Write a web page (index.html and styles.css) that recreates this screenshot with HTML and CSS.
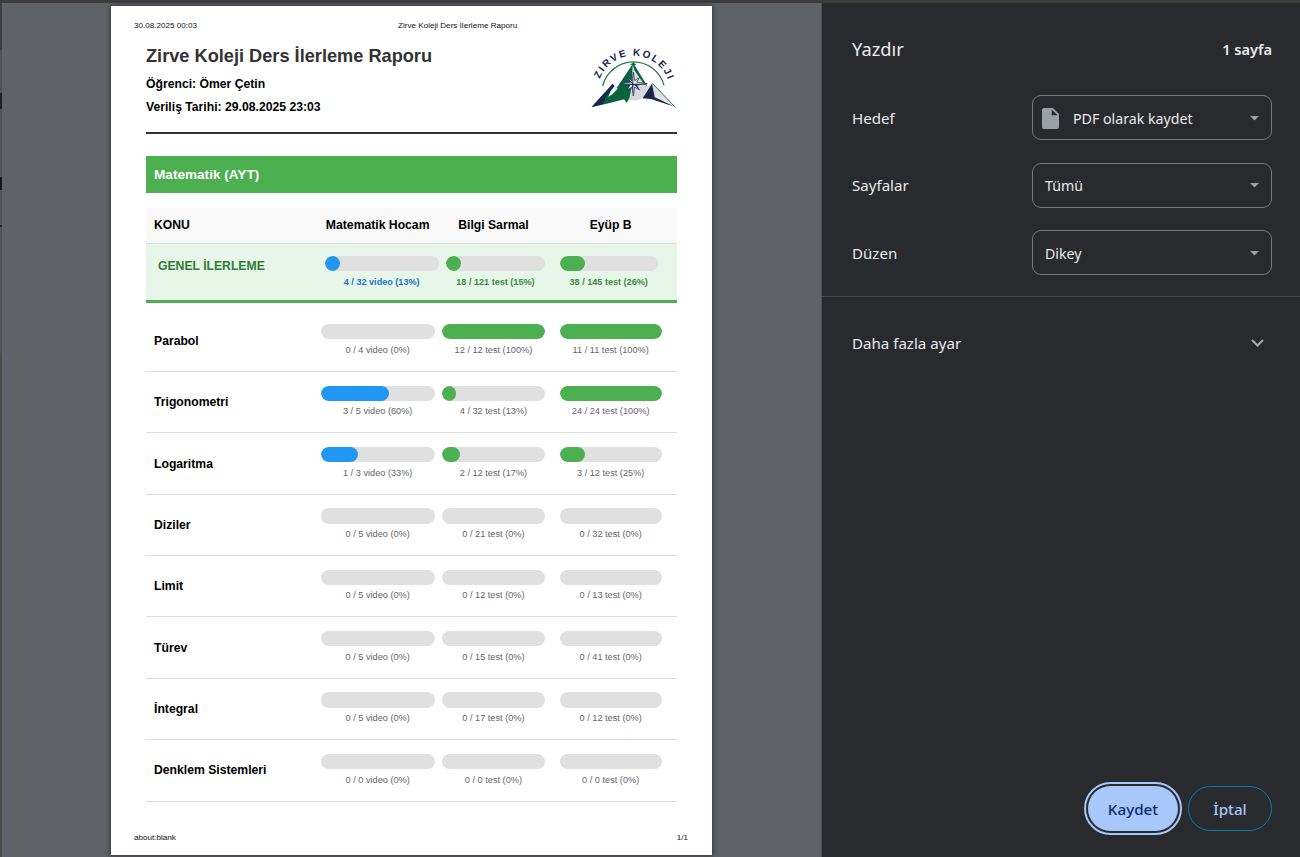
FILE: index.html
```html
<!DOCTYPE html>
<html lang="tr">
<head>
<meta charset="utf-8">
<title>Yazdır</title>
<link rel="stylesheet" href="styles.css">
</head>
<body>
<div class="dialog">
  <div class="edge"></div>
  <main class="preview">
    <article class="sheet">
      <header class="print-head"><span class="stamp">30.08.2025 00:03</span><span class="doc-name">Zirve Koleji Ders İlerleme Raporu</span></header>
      <section class="report-head">
        <div>
          <h1><span>Zirve Koleji Ders İlerleme Raporu</span></h1>
          <p>Öğrenci: Ömer Çetin</p>
          <p>Veriliş Tarihi: 29.08.2025 23:03</p>
        </div>
        <svg class="logo" viewBox="30 30 258 190">
          <path id="ring" d="M52 168A109 109 0 0 1 270 168" fill="none"/>
          <path d="M68 150A95 95 0 0 1 252 148" fill="none" stroke="#2b7d50" stroke-width="4"/>
          <text class="logo-text"><textPath href="#ring" startOffset="51%" text-anchor="middle">ZIRVE KOLEJI</textPath></text>
          <path d="M35 213L100 142L116 160L160 82L204 152L216 141L284 212L218 188L188 187L168 194L140 190Z" fill="#d5d8dc"/>
          <path d="M35 213L98 144L86 181L112 153L158 84L154 158L148 187L140 200L132 190L76 204Z" fill="#08633d"/>
          <path d="M35 213L98 143L103 151L78 181L70 204Z" fill="#16264d"/>
          <path d="M84 184L105 149L113 158L98 174Z" fill="#e9ecef"/>
          <path d="M160 82L202 151L192 145L163 102Z" fill="#08633d"/>
          <path d="M188 187L216 143L224 184L284 212L213 189Z" fill="#16264d"/>
          <path d="M220 144L284 212L228 183Z" fill="#dfe2e5"/>
          <path d="M217 142L284 212" stroke="#2b7d50" stroke-width="3"/>
          <path d="M160 75L162 82L170 85L162 88L160 97L158 88L150 85L158 82Z" fill="#08633d"/>
          <path d="M160 108L164 134L178 125L170 139L202 143L170 147L178 162L164 153L160 180L156 153L142 162L150 147L119 143L150 139L142 125L156 134Z" fill="#eef0f3" stroke="#16264d" stroke-width="2"/>
          <path d="M160 108V180L156 150ZM119 143H202L160 148ZM142 125L160 143L150 139ZM178 162L160 143L170 147Z" fill="#16264d"/>
        </svg>
      </section>
      <h2>Matematik (AYT)</h2>
      <section class="table">
        <div class="row columns"><b>KONU</b><b>Matematik Hocam</b><b>Bilgi Sarmal</b><b>Eyüp B</b></div>
        <div class="row overall">
          <b>GENEL İLERLEME</b>
          <div class="cell video"><div class="bar"><i style="width:13%"></i></div><small>4 / 32 video (13%)</small></div>
          <div class="cell"><div class="bar"><i style="width:15%"></i></div><small>18 / 121 test (15%)</small></div>
          <div class="cell"><div class="bar"><i style="width:26%"></i></div><small>38 / 145 test (26%)</small></div>
        </div>
        <div class="topics" id="topics"></div>
      </section>
      <footer class="print-foot"><span>about:blank</span><span>1/1</span></footer>
    </article>
  </main>
  <aside class="settings">
    <div class="title"><h3>Yazdır</h3><strong>1 sayfa</strong></div>
    <div class="setting"><label>Hedef</label><div class="select target">
      <svg class="file" viewBox="0 0 17 21"><path d="M2 0H11L17 6V19Q17 21 15 21H2Q0 21 0 19V2Q0 0 2 0Z" fill="#9aa0a6"/><path d="M9.7 1.5V7.3H15.5Z" fill="#292a2d"/></svg>
      <span>PDF olarak kaydet</span><svg class="arrow" viewBox="0 0 9 5"><path d="M0 0H9L4.5 4.5Z"/></svg></div></div>
    <div class="setting"><label>Sayfalar</label><div class="select"><span>Tümü</span><svg class="arrow" viewBox="0 0 9 5"><path d="M0 0H9L4.5 4.5Z"/></svg></div></div>
    <div class="setting"><label>Düzen</label><div class="select"><span>Dikey</span><svg class="arrow" viewBox="0 0 9 5"><path d="M0 0H9L4.5 4.5Z"/></svg></div></div>
    <div class="more"><span>Daha fazla ayar</span><svg viewBox="0 0 13 8"><path d="M1 1L6.5 6.5L12 1"/></svg></div>
    <div class="actions"><button class="save">Kaydet</button><button class="cancel">İptal</button></div>
  </aside>
</div>
<script src="topics.js"></script>
</body>
</html>
```

FILE: styles.css
```css
* { box-sizing: border-box; }
body { margin: 0; overflow: hidden; font-family: "Liberation Sans", Arial, sans-serif; }
h1, h2, h3, p { margin: 0; }
.dialog { height: 857px; border-top: 3px solid #3c3c3c; display: grid; grid-template-columns: 2px 819px 479px; background: #5f6368; }
.edge { background: linear-gradient(#3c3e40 0 47px, #505356 47px 90px, #202124 90px 106px, #505254 106px 174px, #15191d 174px 187px, #505254 187px 222px, #202124 222px 224px, #505254 224px 350px, #4a4e4a 350px); }
.preview { padding: 3px 0 0 109px; overflow: hidden; }
.sheet { width: 601px; height: 849px; background: #fff; box-shadow: 0 0 5px 1px #33363a; display: flex; flex-direction: column; }
.print-head { height: 32px; padding: 15px 0 0 23px; display: flex; font-size: 8.1px; line-height: 10px; color: #111; white-space: nowrap; }
.stamp { width: 264px; }
.report-head { height: 96px; margin: 0 35px; border-bottom: 2px solid #333; display: flex; justify-content: space-between; }
.report-head h1 { font-size: 18.2px; line-height: 24px; color: #333; padding-top: 6px; white-space: nowrap; }
.report-head p { font-size: 12.2px; font-weight: bold; line-height: 23px; color: #000; }
.report-head h1 + p { margin-top: 5px; }
.logo { width: 86px; height: 63.3px; margin: 8px 1px 0 0; }
.logo-text { font: bold 30px "Liberation Sans", sans-serif; letter-spacing: 5.4px; fill: #16264d; }
.sheet h2 { height: 37px; margin: 22px 35px 15px; padding-left: 8px; background: #4caf50; color: #fff; font-size: 13.6px; line-height: 37px; }
.table { margin: 0 35px; }
.row { display: grid; grid-template-columns: 166.7px 114px 102.5px 102px; column-gap: 0; padding-left: 8px; font-size: 12.2px; }
.row > :nth-child(3) { margin-left: 7.5px; margin-right: -7.5px; }
.row > :nth-child(4) { margin-left: 22.5px; margin-right: -22.5px; }
.columns { height: 36px; background: #f9f9f9; border-bottom: 1px solid #ddd; line-height: 34px; text-align: center; white-space: nowrap; }
.columns b:first-child { text-align: left; }
.overall { height: 59px; background: #e8f5e9; border-bottom: 3px solid #4caf50; color: #2e7d32; }
.overall > b { padding: 15px 0 0 4px; line-height: 15px; }
.overall .cell { padding: 12px 0 0 4px; }
.overall .video { margin-right: -4px; }
.overall .cell:last-child { padding: 12px 4px 0 0; }
.bar { height: 15.3px; border-radius: 8px; background: #e0e0e0; overflow: hidden; }
.bar i { display: block; height: 100%; border-radius: 8px; background: #4caf50; }
.video .bar i { background: #2196f3; }
small { display: block; text-align: center; font-size: 9.2px; line-height: 12px; margin-top: 4.4px; color: #666; white-space: nowrap; }
.overall small { font-weight: bold; font-size: 9.1px; color: #388e3c; }
.overall .video small { color: #1976d2; }
.topics { padding-top: 7.6px; }
.topic { height: 61.39px; border-bottom: 1px solid #ddd; }
.topic > b { align-self: center; }
.topic .cell { padding-top: 13.6px; }
.print-foot { margin-top: auto; height: 24px; padding: 2px 24px 0 23px; display: flex; justify-content: space-between; font-size: 8.1px; line-height: 10px; color: #111; }
.settings { background: #292a2d; border-left: 1px solid #4c4f53; color: #e8eaed; font: 15.1px "Noto Sans", "Open Sans", sans-serif; display: flex; flex-direction: column; }
.title { height: 92px; padding: 0 28px 0 30px; display: flex; align-items: center; justify-content: space-between; }
.title h3 { font-size: 18.3px; font-weight: 400; padding-bottom: 2px; }
.title strong { font-size: 14.6px; font-weight: 600; }
.setting { height: 45px; margin: 0 28px 22.5px 30px; display: grid; grid-template-columns: 180px 240px; align-items: center; }
.select { height: 45px; border: 1px solid #77797b; border-radius: 9px; padding: 1px 12px 0; display: flex; align-items: center; font-size: 14.2px; }
.target { padding-left: 9px; }
.file { width: 17px; height: 21px; margin-right: 14px; }
.arrow { width: 9px; height: 5px; margin-left: auto; fill: #9aa0a6; }
.more { border-top: 1px solid #46484b; margin-top: -1.5px; height: 92px; padding: 0 36px 0 30px; display: flex; align-items: center; justify-content: space-between; }
.more svg { width: 13px; height: 8px; fill: none; stroke: #a5a9ae; stroke-width: 2; }
.actions { margin-top: auto; padding: 0 28px 26px; display: flex; justify-content: flex-end; gap: 10px; }
.actions button { height: 45px; border-radius: 23px; font: 500 15.2px "Noto Sans", sans-serif; padding: 0; }
.save { width: 90px; border: 0; background: #a8c7fa; color: #062e6f; outline: 2px solid #a8c7fa; outline-offset: 2px; }
.cancel { width: 84px; border: 1px solid #047db7; background: transparent; color: #a8c7fa; }
```

FILE: topics.js
```js
// Each progress entry holds completed count, total count and percentage.
const topics = [
  ["Parabol", [0, 4, 0], [12, 12, 100], [11, 11, 100]],
  ["Trigonometri", [3, 5, 60], [4, 32, 13], [24, 24, 100]],
  ["Logaritma", [1, 3, 33], [2, 12, 17], [3, 12, 25]],
  ["Diziler", [0, 5, 0], [0, 21, 0], [0, 32, 0]],
  ["Limit", [0, 5, 0], [0, 12, 0], [0, 13, 0]],
  ["Türev", [0, 5, 0], [0, 15, 0], [0, 41, 0]],
  ["İntegral", [0, 5, 0], [0, 17, 0], [0, 12, 0]],
  ["Denklem Sistemleri", [0, 0, 0], [0, 0, 0], [0, 0, 0]]
];
const cell = ([done, total, pct], kind) =>
  `<div class="cell ${kind}"><div class="bar"><i style="width:${pct}%"></i></div><small>${done} / ${total} ${kind} (${pct}%)</small></div>`;
document.getElementById("topics").innerHTML = topics.map(([name, video, first, second]) =>
  `<div class="row topic"><b>${name}</b>${cell(video, "video")}${cell(first, "test")}${cell(second, "test")}</div>`).join("");
```
